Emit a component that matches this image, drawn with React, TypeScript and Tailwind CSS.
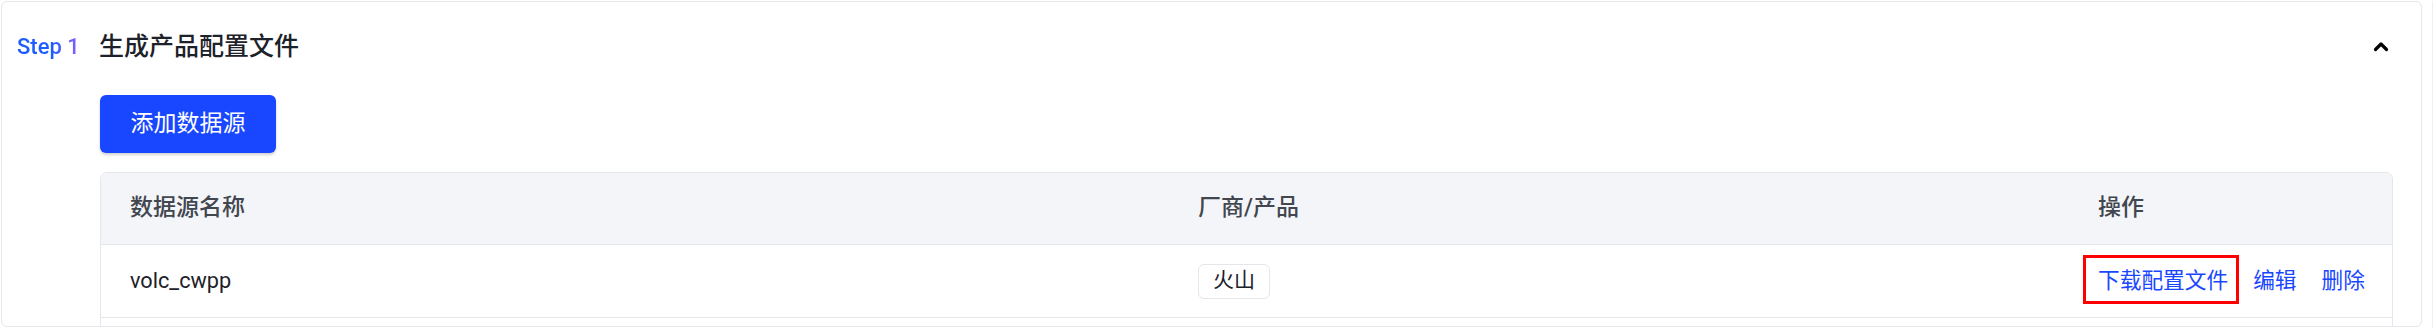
import type { ReactNode } from 'react'

const font = 'font-[Roboto,"Noto_Sans_CJK_SC",sans-serif]'

function ChevronUpIcon() {
  return (
    <svg aria-hidden width="16" height="11" viewBox="0 0 16 11" fill="none">
      <path d="M2.5 8.5L8 3L13.5 8.5" stroke="#000" strokeWidth="3.2" strokeLinecap="round" strokeLinejoin="round" />
    </svg>
  )
}

function Cell({ children, className = '' }: { children?: ReactNode; className?: string }) {
  return <div className={`flex items-center whitespace-nowrap pl-[29px] ${className}`}>{children}</div>
}

const cols = 'grid grid-cols-[1068px_900px_1fr]'

export default function App() {
  return (
    <div className={`h-[328px] w-[2433px] border-r border-[#efefef] bg-white ${font}`}>
      <div className="ml-px mt-px h-[326px] w-[2421px] overflow-hidden rounded-[6px] border border-[#e5e6eb] bg-white">
        {/* header */}
        <div className="flex h-[89px] items-center pl-[15px] pr-[32px]">
          <span className="w-[82px] bg-linear-to-r from-[#1d5cff] from-45% to-[#a65bff] to-90% bg-clip-text text-[22px] font-medium text-transparent">
            Step 1
          </span>
          <span className="text-[25px] font-medium text-[#1d2129]">生成产品配置文件</span>
          <span className="ml-auto flex">
            <ChevronUpIcon />
          </span>
        </div>

        <div className="pl-[97px] pr-[28px]">
          <button
            type="button"
            className="mt-[4px] ml-[1px] h-[58px] w-[176px] rounded-[6px] bg-[#1947ff] text-[23px] text-white shadow-[0_2px_3px_rgba(0,0,0,0.18)]"
          >
            添加数据源
          </button>

          <div className="mt-[19px] ml-[1px] overflow-hidden rounded-t-[7px] border border-[#e5e6eb]">
            <div className={`${cols} h-[71px] bg-[#f4f5f9] text-[23px] font-medium text-[#41464f]`}>
              <Cell>数据源名称</Cell>
              <Cell>厂商/产品</Cell>
              <Cell>操作</Cell>
            </div>
            <div className={`${cols} h-[73px] border-t border-[#e5e6eb] text-[21.7px] text-[#1d2129]`}>
              <Cell>volc_cwpp</Cell>
              <Cell>
                <span className="flex h-[35px] items-center rounded-[6px] border border-[#e5e6eb] px-[14px] text-[21px]">
                  火山
                </span>
              </Cell>
              <Cell className="gap-[25px] text-[#1947ff]">
                <span className="relative">
                  下载配置文件
                  <span className="absolute -top-[10px] -bottom-[7px] -left-[15px] -right-[11px] border-[3px] border-[#ff0000]" />
                </span>
                <span>编辑</span>
                <span>删除</span>
              </Cell>
            </div>
            <div className={`${cols} h-[73px] border-t border-[#e5e6eb]`}>
              <Cell />
              <Cell />
              <Cell />
            </div>
          </div>
        </div>
      </div>
    </div>
  )
}
